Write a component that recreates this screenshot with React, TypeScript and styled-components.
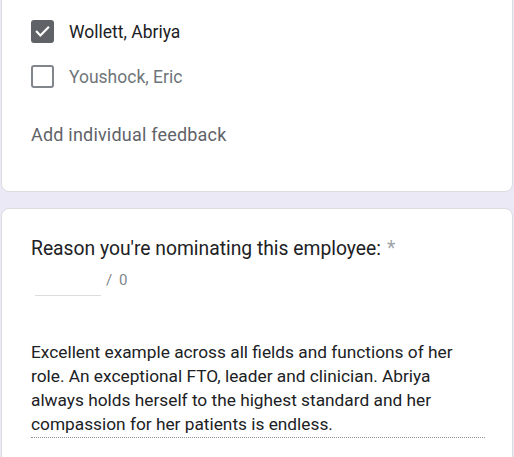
import React from "react";
import styled, { createGlobalStyle } from "styled-components";

const GlobalStyle = createGlobalStyle`
  html, body {
    margin: 0;
    padding: 0;
    background: #ebe9f5;
    overflow: hidden;
    font-family: Roboto, "Liberation Sans", Arial, sans-serif;
  }
`;

const Page = styled.div`
  display: flex;
  flex-direction: column;
  gap: 16px;
  margin-top: -62px;
  padding: 0 1px;
`;

const Card = styled.section<{ $pt: number; $pb: number }>`
  background: #ffffff;
  border: 1px solid #dadce0;
  border-radius: 8px;
  padding: ${(p) => p.$pt}px 28px ${(p) => p.$pb}px 29px;
  display: flex;
  flex-direction: column;
`;

const OptionRow = styled.label`
  display: flex;
  align-items: center;
  height: 45px;
  gap: 15px;
`;

const Box = styled.span<{ $checked: boolean }>`
  box-sizing: border-box;
  width: 23px;
  height: 23px;
  border-radius: 3px;
  display: flex;
  align-items: center;
  justify-content: center;
  background: ${(p) => (p.$checked ? "#5f6368" : "#ffffff")};
  border: 2px solid ${(p) => (p.$checked ? "#5f6368" : "#80868b")};
  flex-shrink: 0;
`;

const OptionText = styled.span<{ $checked: boolean }>`
  font-size: 17.5px;
  line-height: 24px;
  color: ${(p) => (p.$checked ? "#202124" : "#70757a")};
`;

const FeedbackLink = styled.div`
  margin-top: 24px;
  font-size: 18px;
  line-height: 24px;
  color: #5f6368;
  font-weight: 400;
  letter-spacing: 0.2px;
`;

const Title = styled.div`
  font-size: 19.3px;
  line-height: 28px;
  color: #202124;
`;

const Star = styled.span`
  color: #a0a4a8;
  margin-left: 6px;
`;

const CounterRow = styled.div`
  display: flex;
  align-items: center;
  height: 32px;
  margin-top: 1px;
  gap: 5px;
`;

const BlankInput = styled.span`
  box-sizing: border-box;
  width: 66px;
  height: 32px;
  margin-left: 4px;
  border-bottom: 1px solid #dadce0;
`;

const Counter = styled.span`
  font-size: 15px;
  color: #80868b;
  word-spacing: 3px;
`;

const Answer = styled.div`
  margin-top: 44px;
  font-size: 17.3px;
  line-height: 24px;
  color: #202124;
  padding-bottom: 1px;
  border-bottom: 1px dotted #8f949a;
  width: 454px;
`;

const Check = () => (
  <svg width="17" height="17" viewBox="0 0 24 24">
    <path
      d="M4 12.5l5 5L20 6.5"
      fill="none"
      stroke="#ffffff"
      strokeWidth="3"
      strokeLinecap="square"
    />
  </svg>
);

const options = [
  { name: "", checked: false },
  { name: "Wollett, Abriya", checked: true },
  { name: "Youshock, Eric", checked: false },
];

export default function App() {
  return (
    <>
      <GlobalStyle />
      <Page>
        <Card $pt={25} $pb={44}>
          {options.map((o, i) => (
            <OptionRow key={i}>
              <Box $checked={o.checked}>{o.checked && <Check />}</Box>
              <OptionText $checked={o.checked}>{o.name}</OptionText>
            </OptionRow>
          ))}
          <FeedbackLink>Add individual feedback</FeedbackLink>
        </Card>
        <Card $pt={26} $pb={40}>
          <Title>
            Reason you're nominating this employee:<Star>*</Star>
          </Title>
          <CounterRow>
            <BlankInput />
            <Counter>/ 0</Counter>
          </CounterRow>
          <Answer>
            Excellent example across all fields and functions of her role. An
            exceptional FTO, leader and clinician. Abriya always holds herself
            to the highest standard and her compassion for her patients is
            endless.
          </Answer>
        </Card>
      </Page>
    </>
  );
}
